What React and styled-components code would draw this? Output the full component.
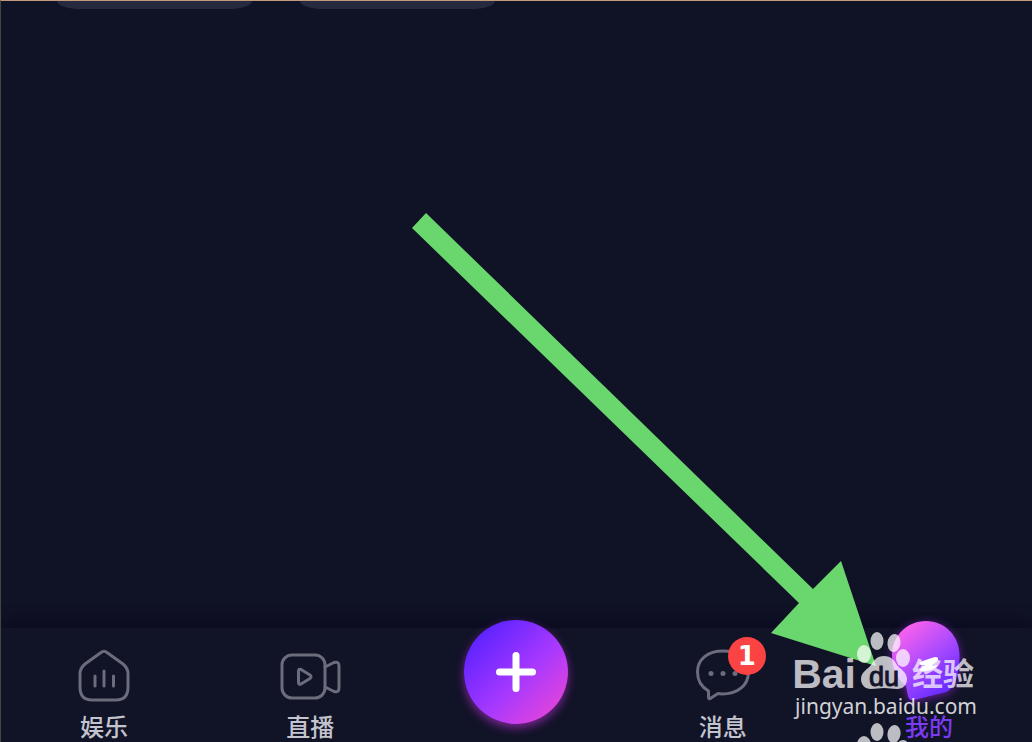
import React from 'react';
import styled, { createGlobalStyle } from 'styled-components';

const GlobalStyle = createGlobalStyle`
  * {
    box-sizing: border-box;
  }
  body {
    margin: 0;
    background: #101225;
    font-family: 'Liberation Sans', 'Noto Sans CJK SC', sans-serif;
  }
`;

const Page = styled.div`
  position: relative;
  display: flex;
  flex-direction: column;
  min-height: 100vh;
  overflow: hidden;
  background: #101225;
  border-top: 1px solid #c4987c;
  border-left: 1px solid #44473f;
`;

const Chips = styled.div`
  display: flex;
  gap: 48px;
  padding: 0 56px;
`;

const Chip = styled.div`
  flex: 0 1 195px;
  height: 8px;
  border-radius: 0 0 24px 24px / 0 0 8px 8px;
  background: #27293f;
`;

const Content = styled.main`
  flex: 1;
`;

const TabBar = styled.nav`
  display: grid;
  grid-template-columns: repeat(5, 1fr);
  grid-template-rows: 114px;
  background: #111327;
  box-shadow: 0 -6px 12px #0a0b20;
`;

const Tab = styled.button`
  display: flex;
  flex-direction: column;
  align-items: center;
  justify-content: flex-end;
  gap: 8px;
  min-width: 0;
  padding: 0 0 2px;
  border: 0;
  background: none;
  color: ${props => (props.$active ? '#7a3cf0' : '#c3c4ce')};
  font: 500 24px/28px 'Noto Sans CJK SC', sans-serif;
  cursor: pointer;
`;

const IconBox = styled.span`
  position: relative;
  display: flex;
  align-items: flex-end;
  height: 60px;
`;

const Icon = styled.svg`
  display: block;
  overflow: visible;
  fill: none;
  stroke: #6b6c7c;
  stroke-width: 3;
  stroke-linecap: round;
  stroke-linejoin: round;
`;

const ProfileIcon = styled.svg`
  display: block;
  overflow: visible;
  filter: drop-shadow(0 2px 5px rgba(160, 40, 230, 0.6));
`;

const Badge = styled.span`
  position: absolute;
  top: -7px;
  left: 35px;
  width: 38px;
  height: 38px;
  border-radius: 50%;
  background: #fb4343;
  color: #fff;
  font: 700 26px/38px 'DejaVu Sans', sans-serif;
  text-align: center;
`;

const AddCell = styled.div`
  display: flex;
  align-items: flex-end;
  justify-content: center;
  padding-bottom: 18px;
`;

const AddButton = styled.button`
  display: grid;
  place-items: center;
  flex: none;
  width: 104px;
  height: 104px;
  padding: 0;
  border: 0;
  border-radius: 50%;
  background: linear-gradient(135deg, #5a22ff 12%, #a638ff 55%, #e044dc 88%);
  box-shadow: 0 4px 10px rgba(190, 50, 220, 0.6);
  cursor: pointer;
`;

const Arrow = styled.svg`
  position: absolute;
  left: 410px;
  bottom: 75px;
  fill: #69d76d;
  pointer-events: none;
`;

const Watermark = styled.div`
  position: absolute;
  right: 55px;
  bottom: 22px;
  color: rgba(255, 255, 255, 0.72);
  pointer-events: none;
`;

const Brand = styled.div`
  display: flex;
  align-items: flex-end;
  justify-content: flex-end;
  padding: 0 3px 2px 0;
`;

const BrandName = styled.span`
  margin-right: 2px;
  font: 700 41px/32px 'Liberation Sans', sans-serif;
`;

const BrandSuffix = styled.span`
  font: 700 31px/36px 'Noto Sans CJK SC', sans-serif;
`;

const Site = styled.div`
  color: rgba(255, 255, 255, 0.82);
  font: 400 21px/28px 'Noto Sans', sans-serif;
  text-align: right;
`;

const PawIcon = styled.svg`
  display: block;
  flex: none;
  overflow: visible;
  fill: currentColor;
`;

const NextPaw = styled.div`
  position: absolute;
  top: 91px;
  right: 65px;
`;

const PawText = styled.text`
  fill: #14152a;
  stroke: #14152a;
  stroke-width: 1px;
  font: 400 27px 'Liberation Sans', sans-serif;
`;

const Paw = ({ children }) => (
  <PawIcon width="54" height="58" viewBox="0 0 54 58">
    <ellipse cx="6" cy="22" rx="7" ry="9" />
    <ellipse cx="19" cy="9" rx="6.5" ry="9" />
    <ellipse cx="36" cy="11" rx="6.5" ry="9" transform="rotate(8 36 11)" />
    <ellipse cx="45" cy="26" rx="7" ry="9" />
    <path d="M26 24C33 24 36 28 39 33C42 37 49 40 49 47C49 53 45 57 39 57C34 57 31 56 26 56C21 56 18 57 13 57C7 57 3 53 3 47C3 40 10 37 13 33C16 28 19 24 26 24Z" />
    {children}
  </PawIcon>
);

const HomeIcon = () => (
  <Icon width="60" height="60" viewBox="0 0 60 60">
    <path d="M27 8.500Q30 6 33 8.500L49 20Q54 24 54 30V43Q54 56 42 56H18Q6 56 6 43V30Q6 24 11 20Z" />
    <path d="M21 32V42M30 27V42M39.5 32V42" />
  </Icon>
);

const LiveIcon = () => (
  <Icon width="60" height="60" viewBox="0 0 60 60">
    <rect x="2" y="11" width="43" height="43" rx="10" />
    <path d="M45 23L54 18.5Q59 17 59 22V44Q59 49 54 47.5L45 43" />
    <path d="M18.5 27Q18.5 24.500 21 25.500L30 31Q32 32.500 30 34.500L21 40Q18.500 41 18.500 38.500Z" />
  </Icon>
);

const MessageIcon = () => (
  <Icon width="60" height="60" viewBox="0 0 60 60">
    <path d="M15.500 47C8.500 43 4.500 36 4.500 28C4.500 15 15 7 30 7C45 7 55.500 15 55.500 28C55.500 41 45 50 29 50L25 49.500L18 54Q15.500 56 15.500 53Z" />
    <g fill="#6b6c7c" stroke="none">
      <circle cx="18" cy="29.500" r="2.500" />
      <circle cx="30" cy="29.500" r="2.500" />
      <circle cx="42" cy="29.500" r="2.500" />
    </g>
  </Icon>
);

const MeIcon = () => (
  <ProfileIcon width="80" height="84" viewBox="0 0 80 84">
    <defs>
      <linearGradient id="me" x1="0.2" y1="0.1" x2="0.75" y2="0.9">
        <stop offset="0" stopColor="#f560ee" />
        <stop offset="0.55" stopColor="#a548ff" />
        <stop offset="1" stopColor="#6a2cff" />
      </linearGradient>
    </defs>
    <path
      fill="url(#me)"
      d="M37 1C56 1 70.500 16 70.500 35C70.500 51 67 68 57 72L25 80Q20 81 19 76L17 66C8 59 3 48 3 35C3 16 18 1 37 1Z"
    />
    <path
      fill="#fff"
      d="M31 42Q39 39 46 37Q51 37 48 41L43 46L49 45Q46 50 37 51Q28 53 32 48L36 45Q29 46 31 42Z"
    />
  </ProfileIcon>
);

const tabs = [
  { label: '娱乐', icon: HomeIcon },
  { label: '直播', icon: LiveIcon },
  { add: true },
  { label: '消息', icon: MessageIcon, count: 1 },
  { label: '我的', icon: MeIcon, active: true }
];

export default function App() {
  return (
    <Page>
      <GlobalStyle />
      <Chips>
        <Chip />
        <Chip />
      </Chips>
      <Content />
      <TabBar>
        {tabs.map(({ label, icon: TabIcon, count, active, add }) =>
          add ? (
            <AddCell key="add">
              <AddButton aria-label="add">
                <svg
                  width="40"
                  height="40"
                  viewBox="0 0 40 40"
                  stroke="#fff"
                  strokeWidth="7"
                  strokeLinecap="round"
                >
                  <path d="M20 3.500V36.500M3.500 20H36.500" />
                </svg>
              </AddButton>
            </AddCell>
          ) : (
            <Tab key={label} $active={active}>
              <IconBox>
                <TabIcon />
                {count && <Badge>{count}</Badge>}
              </IconBox>
              <span>{label}</span>
            </Tab>
          )
        )}
      </TabBar>
      <Arrow width="466" height="454" viewBox="0 0 466 454">
        <path d="M15 0L402 376L430 348L465 453L360 420L388 390L1 15Z" />
      </Arrow>
      <Watermark>
        <Brand>
          <BrandName>Bai</BrandName>
          <Paw>
            <PawText x="11" y="54">
              du
            </PawText>
          </Paw>
          <BrandSuffix>经验</BrandSuffix>
        </Brand>
        <Site>jingyan.baidu.com</Site>
        <NextPaw>
          <Paw />
        </NextPaw>
      </Watermark>
    </Page>
  );
}
